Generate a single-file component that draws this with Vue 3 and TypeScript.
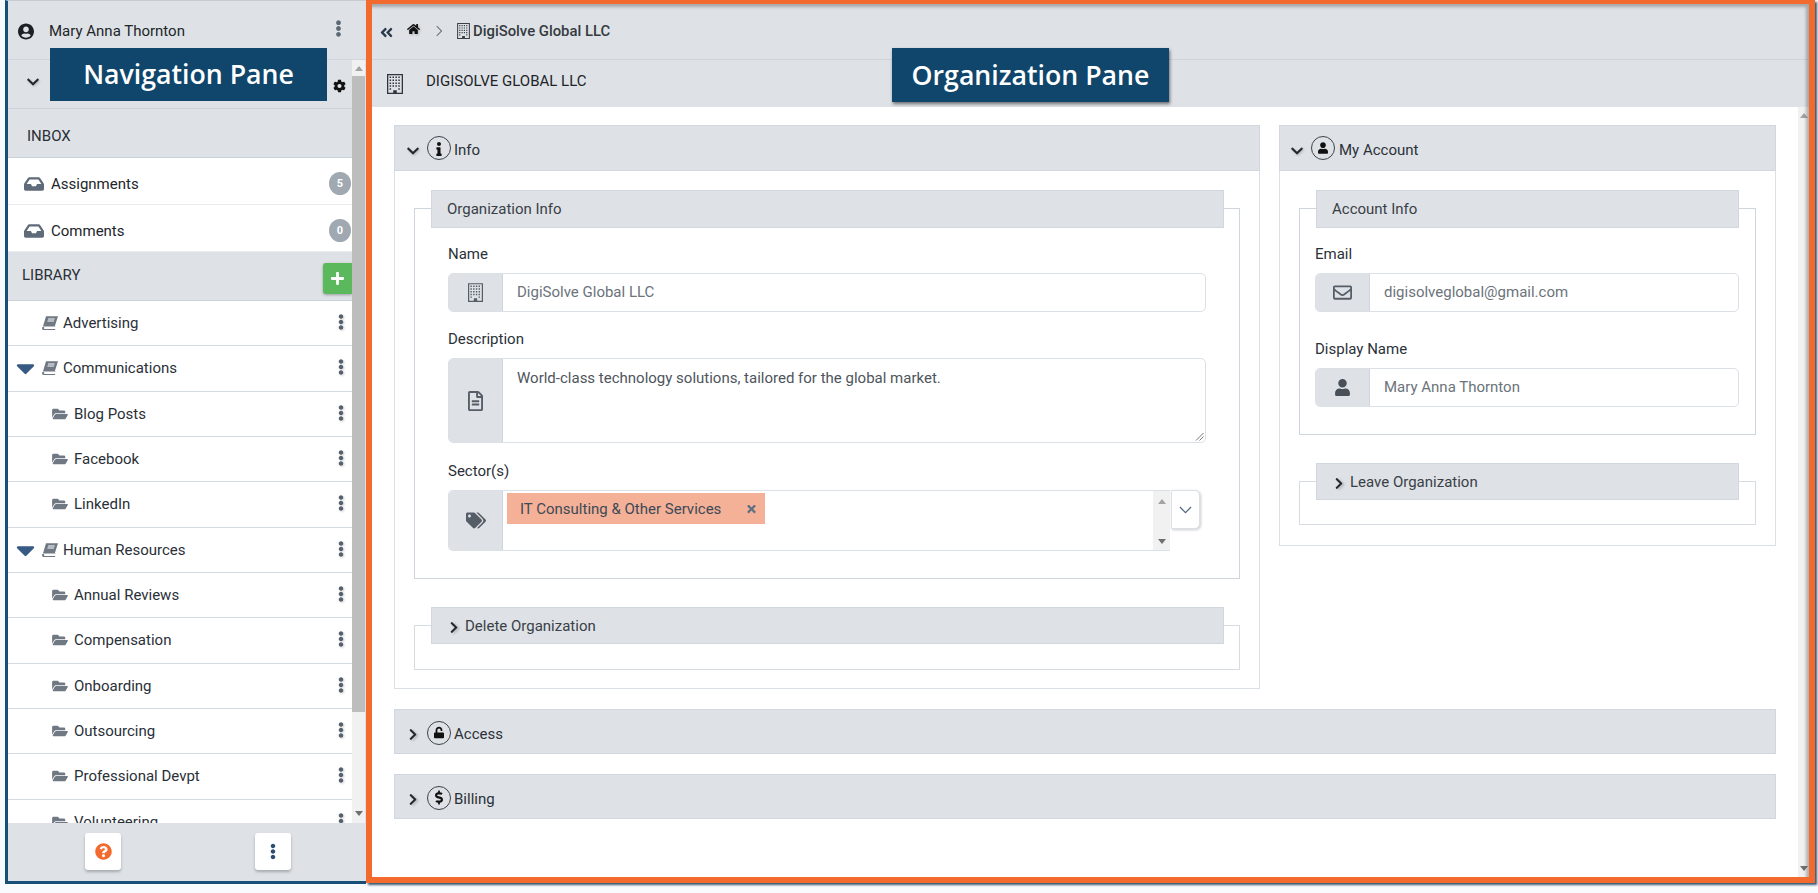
<script setup lang="ts">
import { h } from 'vue'
import type { FunctionalComponent } from 'vue'

type Glyph = { w: number; h: number; d: string }

const gridSquares = (() => {
  let out = 'M0 0H16V20H0ZM1.3 1.3V18.7H14.7V1.3Z'
  for (let r = 0; r < 5; r++) {
    for (let c = 0; c < 4; c++) {
      if (r === 4 && c > 0 && c < 3) continue
      out += `M${2.6 + c * 2.9} ${2.6 + r * 2.9}h1.5v1.5h-1.5z`
    }
  }
  return out + 'M6.2 16.2h3.6v2.6H6.2z'
})()

const glyphs: Record<string, Glyph> = {
  chevDown: { w: 448, h: 512, d: 'M207.029 381.476L12.686 187.132c-9.373-9.373-9.373-24.569 0-33.941l22.667-22.667c9.357-9.357 24.522-9.375 33.901-.04L224 284.505l154.745-154.021c9.379-9.335 24.544-9.317 33.901.04l22.667 22.667c9.373 9.373 9.373 24.569 0 33.941L240.971 381.476c-9.373 9.372-24.569 9.372-33.942 0z' },
  chevThin: { w: 12, h: 8, d: 'M.9.6L6 5.7 11.1.6l.9.9-6 6-6-6z' },
  chevRight: { w: 320, h: 512, d: 'M285.476 272.971L91.132 467.314c-9.373 9.373-24.569 9.373-33.941 0l-22.667-22.667c-9.357-9.357-9.375-24.522-.04-33.901L188.505 256 34.484 101.255c-9.335-9.379-9.317-24.544.04-33.901l22.667-22.667c9.373-9.373 24.569-9.373 33.941 0L285.475 239.03c9.373 9.372 9.373 24.568.001 33.941z' },
  plus: { w: 448, h: 512, d: 'M416 208H272V64c0-17.67-14.33-32-32-32h-32c-17.67 0-32 14.33-32 32v144H32c-17.67 0-32 14.33-32 32v32c0 17.67 14.33 32 32 32h144v144c0 17.67 14.33 32 32 32h32c17.67 0 32-14.33 32-32V304h144c17.67 0 32-14.33 32-32v-32c0-17.67-14.33-32-32-32z' },
  dots: { w: 192, h: 512, d: 'M96 184c39.8 0 72 32.2 72 72s-32.2 72-72 72-72-32.2-72-72 32.2-72 72-72zM24 80c0 39.8 32.2 72 72 72s72-32.2 72-72S135.8 8 96 8 24 40.2 24 80zm0 352c0 39.8 32.2 72 72 72s72-32.2 72-72-32.2-72-72-72-72 32.2-72 72z' },
  home: { w: 576, h: 512, d: 'M280.37 148.26L96 300.11V464a16 16 0 0 0 16 16l112.06-.29a16 16 0 0 0 15.92-16V368a16 16 0 0 1 16-16h64a16 16 0 0 1 16 16v95.64a16 16 0 0 0 16 16.05L464 480a16 16 0 0 0 16-16V300L295.67 148.26a12.19 12.19 0 0 0-15.3 0zM571.6 251.47L488 182.56V44.05a12 12 0 0 0-12-12h-56a12 12 0 0 0-12 12v72.61L318.47 43a48 48 0 0 0-61 0L4.34 251.47a12 12 0 0 0-1.6 16.9l25.5 31A12 12 0 0 0 45.15 301l235.22-193.74a12.19 12.19 0 0 1 15.3 0L530.9 301a12 12 0 0 0 16.9-1.6l25.5-31a12 12 0 0 0-1.7-16.93z' },
  user: { w: 448, h: 512, d: 'M224 256c70.7 0 128-57.3 128-128S294.7 0 224 0 96 57.3 96 128s57.3 128 128 128zm89.6 32h-16.7c-22.2 10.2-46.9 16-72.9 16s-50.6-5.8-72.9-16h-16.7C60.2 288 0 348.2 0 422.4V464c0 26.5 21.5 48 48 48h352c26.5 0 48-21.5 48-48v-41.6c0-74.2-60.2-134.4-134.4-134.4z' },
  userCircle: { w: 496, h: 512, d: 'M248 8C111 8 0 119 0 256s111 248 248 248 248-111 248-248S385 8 248 8zm0 96c48.6 0 88 39.4 88 88s-39.4 88-88 88-88-39.4-88-88 39.4-88 88-88zm0 344c-58.7 0-111.3-26.6-146.5-68.2 18.8-35.4 55.6-59.8 98.5-59.8 2.4 0 4.8.4 7.1 1.1 13 4.2 26.6 6.9 40.9 6.9 14.3 0 28-2.7 40.9-6.9 2.3-.7 4.7-1.1 7.1-1.1 42.9 0 79.7 24.4 98.5 59.8C359.3 421.4 306.7 448 248 448z' },
  help: { w: 512, h: 512, d: 'M504 256c0 136.997-111.043 248-248 248S8 392.997 8 256C8 119.083 119.043 8 256 8s248 111.083 248 248zM262.655 90c-54.497 0-89.255 22.957-116.549 63.758-3.536 5.286-2.353 12.415 2.715 16.258l34.699 26.31c5.205 3.947 12.621 3.008 16.665-2.122 17.864-22.658 30.113-35.797 57.303-35.797 20.429 0 45.698 13.148 45.698 32.958 0 14.976-12.363 22.667-32.534 33.976C247.128 238.528 216 254.941 216 296v4c0 6.627 5.373 12 12 12h56c6.627 0 12-5.373 12-12v-1.333c0-28.462 83.186-29.647 83.186-106.667 0-58.002-60.165-102-116.531-102zM256 338c-25.365 0-46 20.635-46 46 0 25.364 20.635 46 46 46s46-20.636 46-46c0-25.365-20.635-46-46-46z' },
  cog: { w: 512, h: 512, d: 'M487.4 315.7l-42.6-24.6c4.3-23.2 4.3-47 0-70.2l42.6-24.6c4.9-2.8 7.1-8.6 5.5-14-11.1-35.6-30-67.8-54.7-94.6-3.8-4.1-10-5.1-14.8-2.3L380.8 110c-17.9-15.4-38.5-27.3-60.8-35.1V25.8c0-5.6-3.9-10.5-9.4-11.7-36.7-8.2-74.3-7.8-109.2 0-5.5 1.2-9.4 6.1-9.4 11.7V75c-22.2 7.9-42.8 19.8-60.8 35.1L88.7 85.5c-4.9-2.8-11-1.9-14.8 2.3-24.7 26.7-43.6 58.9-54.7 94.6-1.7 5.4.6 11.2 5.5 14L67.3 221c-4.3 23.2-4.3 47 0 70.2l-42.6 24.6c-4.9 2.8-7.1 8.6-5.5 14 11.1 35.6 30 67.8 54.7 94.6 3.8 4.1 10 5.1 14.8 2.3l42.6-24.6c17.9 15.4 38.5 27.3 60.8 35.1v49.2c0 5.6 3.9 10.5 9.4 11.7 36.7 8.2 74.3 7.8 109.2 0 5.5-1.2 9.4-6.1 9.4-11.7v-49.2c22.2-7.9 42.8-19.8 60.8-35.1l42.6 24.6c4.9 2.8 11 1.9 14.8-2.3 24.7-26.7 43.6-58.9 54.7-94.6 1.5-5.5-.7-11.3-5.6-14.1zM256 336c-44.1 0-80-35.9-80-80s35.9-80 80-80 80 35.9 80 80-35.9 80-80 80z' },
  caret: { w: 320, h: 512, d: 'M31.3 192h257.3c17.8 0 26.7 21.5 14.1 34.1L174.1 354.8c-7.8 7.8-20.5 7.8-28.3 0L17.2 226.1C4.6 213.5 13.5 192 31.3 192z' },
  times: { w: 352, h: 512, d: 'M242.72 256l100.07-100.07c12.28-12.28 12.28-32.19 0-44.48l-22.24-22.24c-12.28-12.28-32.19-12.28-44.48 0L176 189.28 75.93 89.21c-12.28-12.28-32.19-12.28-44.48 0L9.21 111.45c-12.28 12.28-12.28 32.19 0 44.48L109.28 256 9.21 356.07c-12.28 12.28-12.28 32.19 0 44.48l22.24 22.24c12.28 12.28 32.2 12.28 44.48 0L176 322.72l100.07 100.07c12.28 12.28 32.2 12.28 44.48 0l22.24-22.24c12.28-12.28 12.28-32.19 0-44.48L242.72 256z' },
  folder: { w: 576, h: 512, d: 'M572.694 292.093L500.27 416.248A63.997 63.997 0 0 1 444.989 448H45.025c-18.523 0-30.064-20.093-20.731-36.093l72.424-124.155A64 64 0 0 1 152 256h399.964c18.523 0 30.064 20.093 20.73 36.093zM152 224h328v-48c0-26.51-21.49-48-48-48H272l-64-64H48C21.49 64 0 85.49 0 112v278.046l69.077-118.418C86.214 242.25 117.989 224 152 224z' },
  tags: { w: 640, h: 512, d: 'M497.941 225.941L286.059 14.059A48 48 0 0 0 252.118 0H48C21.49 0 0 21.49 0 48v204.118a48 48 0 0 0 14.059 33.941l211.882 211.882c18.744 18.745 49.136 18.746 67.882 0l204.118-204.118c18.745-18.745 18.745-49.137 0-67.882zM112 160c-26.51 0-48-21.49-48-48s21.49-48 48-48 48 21.49 48 48-21.49 48-48 48zm513.941 133.823L421.823 497.941c-18.745 18.745-49.137 18.745-67.882 0l-.36-.36L527.64 323.522c16.999-16.999 26.36-39.6 26.36-63.64s-9.362-46.641-26.36-63.64L331.397 0h48.721a48 48 0 0 1 33.941 14.059l211.882 211.882c18.745 18.745 18.745 49.137 0 67.882z' },
  inbox: { w: 576, h: 512, d: 'M567.938 243.908L462.25 85.374A48.003 48.003 0 0 0 422.311 64H153.689a48 48 0 0 0-39.938 21.374L8.062 243.908A47.994 47.994 0 0 0 0 270.533V400c0 26.51 21.49 48 48 48h480c26.51 0 48-21.49 48-48V270.533a47.994 47.994 0 0 0-8.062-26.625zM162.252 128h251.497l85.333 128H376l-32 64H232l-32-64H76.918l85.334-128z' },
  info: { w: 192, h: 512, d: 'M20 424.229h20V279.771H20c-11.046 0-20-8.954-20-20V212c0-11.046 8.954-20 20-20h112c11.046 0 20 8.954 20 20v212.229h20c11.046 0 20 8.954 20 20V492c0 11.046-8.954 20-20 20H20c-11.046 0-20-8.954-20-20v-47.771c0-11.046 8.954-20 20-20zM96 0C56.235 0 24 32.235 24 72s32.235 72 72 72 72-32.235 72-72S135.764 0 96 0z' },
  unlock: { w: 448, h: 512, d: 'M400 256H152V152.9c0-39.6 31.7-72.5 71.3-72.9 40-.4 72.7 32.1 72.7 72v16c0 13.3 10.7 24 24 24h32c13.3 0 24-10.7 24-24v-16C376 68 307.5-.3 223.5 0 139.5.3 72 69.5 72 153.5V256H48c-26.5 0-48 21.5-48 48v160c0 26.5 21.5 48 48 48h352c26.5 0 48-21.5 48-48V304c0-26.5-21.5-48-48-48z' },
  dollar: { w: 288, h: 512, d: 'M209.2 233.4l-108-31.6C88.7 198.2 80 186.5 80 173.5c0-16.3 13.2-29.5 29.5-29.5h66.3c12.2 0 24.2 3.7 34.2 10.5 6.1 4.1 14.3 3.1 19.5-2l34.8-34c7.1-6.9 6.1-18.4-1.8-24.5C238 74.8 207.4 64.1 176 64V16c0-8.8-7.2-16-16-16h-32c-8.8 0-16 7.2-16 16v48h-2.5C45.8 64-5.4 118.7.5 183.6c4.2 46.1 39.4 83.6 83.8 96.6l102.5 30c12.5 3.7 21.2 15.3 21.2 28.3 0 16.3-13.2 29.5-29.5 29.5h-66.3C100 368 88 364.3 78 357.5c-6.1-4.1-14.3-3.1-19.5 2l-34.8 34c-7.1 6.9-6.1 18.4 1.8 24.5 24.5 19.2 55.1 29.9 86.5 30v48c0 8.8 7.2 16 16 16h32c8.8 0 16-7.2 16-16v-48.2c46.6-.9 90.3-28.6 105.7-72.7 21.5-61.6-14.6-124.8-72.5-141.7z' },
  fileAlt: { w: 384, h: 512, d: 'M288 248v28c0 6.6-5.4 12-12 12H108c-6.6 0-12-5.4-12-12v-28c0-6.6 5.4-12 12-12h168c6.6 0 12 5.4 12 12zm-12 72H108c-6.6 0-12 5.4-12 12v28c0 6.6 5.4 12 12 12h168c6.6 0 12-5.4 12-12v-28c0-6.6-5.4-12-12-12zm108-188.1V464c0 26.5-21.5 48-48 48H48c-26.5 0-48-21.5-48-48V48C0 21.5 21.5 0 48 0h204.1C264.8 0 277 5.1 286 14.1L369.9 98c9 8.9 14.1 21.2 14.1 33.9zm-128-80V128h76.1L256 51.9zM336 464V176H232c-13.3 0-24-10.7-24-24V48H48v416h288z' },
  envelope: { w: 512, h: 512, d: 'M464 64H48C21.49 64 0 85.49 0 112v288c0 26.51 21.49 48 48 48h416c26.51 0 48-21.49 48-48V112c0-26.51-21.49-48-48-48zm0 48v40.805c-22.422 18.259-58.168 46.651-134.587 106.49-16.841 13.247-50.201 45.072-73.413 44.701-23.208.375-56.579-31.459-73.413-44.701C106.18 199.465 70.425 171.067 48 152.805V112h416zM48 400V214.398c22.914 18.251 55.409 43.862 104.938 82.646 21.857 17.205 60.134 55.186 103.062 54.955 42.717.231 80.509-37.199 103.053-54.947 49.528-38.783 82.032-64.401 104.947-82.653V400H48z' },
  angles: { w: 448, h: 512, d: 'M223.7 239l136-136c9.4-9.4 24.6-9.4 33.9 0l22.6 22.6c9.4 9.4 9.4 24.6 0 33.9L319.9 256l96.4 96.4c9.4 9.4 9.4 24.6 0 33.9L393.7 409c-9.4 9.4-24.6 9.4-33.9 0l-136-136c-9.5-9.4-9.5-24.6-.1-34zm-192 34l136 136c9.4 9.4 24.6 9.4 33.9 0l22.6-22.6c9.4-9.4 9.4-24.6 0-33.9L127.9 256l96.4-96.4c9.4-9.4 9.4-24.6 0-33.9L201.7 103c-9.4-9.4-24.6-9.4-33.9 0l-136 136c-9.5 9.4-9.5 24.6-.1 34z' },
  angleThin: { w: 10, h: 16, d: 'M1.6 0.6L9 8l-7.4 7.4-1.1-1.1L6.8 8 .5 1.7z' },
  book: { w: 16, h: 14, d: 'M4 .3H16L12.9 10H1.1ZM6.2 2.6l-.3 1h6.6l.3-1ZM5.6 4.6l-.3 1h6.6l.3-1ZM1.1 10.4C-.3 11.2-.4 13.4 1.3 14H13l.3-1H2.6c-1.1-.3-1.1-1.6 0-1.9h10.7l.2-.7Z' },
  building: { w: 16, h: 20, d: gridSquares },
}

const Ico: FunctionalComponent<{ name: string }> = (props) => {
  const g = glyphs[props.name]
  return h('svg', { viewBox: `0 0 ${g.w} ${g.h}`, fill: 'currentColor', 'aria-hidden': 'true' }, [
    h('path', { d: g.d, 'fill-rule': 'evenodd' }),
  ])
}
Ico.props = ['name']

const inbox = [
  { label: 'Assignments', count: 5 },
  { label: 'Comments', count: 0 },
]

const library = [
  { label: 'Advertising', kind: 'book', open: false },
  { label: 'Communications', kind: 'book', open: true },
  { label: 'Blog Posts', kind: 'folder', open: false },
  { label: 'Facebook', kind: 'folder', open: false },
  { label: 'LinkedIn', kind: 'folder', open: false },
  { label: 'Human Resources', kind: 'book', open: true },
  { label: 'Annual Reviews', kind: 'folder', open: false },
  { label: 'Compensation', kind: 'folder', open: false },
  { label: 'Onboarding', kind: 'folder', open: false },
  { label: 'Outsourcing', kind: 'folder', open: false },
  { label: 'Professional Devpt', kind: 'folder', open: false },
  { label: 'Volunteering', kind: 'folder', open: false },
]
</script>

<template>
  <div class="app">
    <aside class="nav">
      <div class="nav-top">
        <Ico name="userCircle" class="i-user" />
        <span class="nav-name">Mary Anna Thornton</span>
        <Ico name="dots" class="i-dots-top" />
      </div>
      <div class="nav-mid">
        <div class="nav-col">
          <div class="row-settings">
            <Ico name="chevDown" class="i-chev" />
            <Ico name="cog" class="i-cog" />
          </div>
          <div class="row-inbox">INBOX</div>
          <div v-for="m in inbox" :key="m.label" class="row-mail">
            <Ico name="inbox" class="i-inbox" />
            <span class="grow">{{ m.label }}</span>
            <span class="badge">{{ m.count }}</span>
          </div>
          <div class="row-library">
            <span class="grow">LIBRARY</span>
            <span class="add"><Ico name="plus" class="i-plus" /></span>
          </div>
          <div class="tree">
            <div v-for="n in library" :key="n.label" class="tree-row" :class="n.kind">
              <Ico v-if="n.open" name="caret" class="i-caret" />
              <Ico :name="n.kind" class="i-kind" />
              <span class="grow">{{ n.label }}</span>
              <Ico name="dots" class="i-dots" />
            </div>
          </div>
        </div>
        <div class="sb sb-nav">
          <span class="up"></span>
          <span class="thumb"></span>
          <span class="rest"><span class="down"></span></span>
        </div>
      </div>
      <div class="nav-foot">
        <span class="foot-btn"><Ico name="help" class="i-help" /></span>
        <span class="foot-btn"><Ico name="dots" class="i-foot-dots" /></span>
      </div>
    </aside>

    <main class="org">
      <div class="crumbs">
        <Ico name="angles" class="i-angles" />
        <Ico name="home" class="i-home" />
        <Ico name="angleThin" class="i-sep" />
        <Ico name="building" class="i-bc" />
        <span class="crumb-text">DigiSolve Global LLC</span>
      </div>
      <div class="title">
        <Ico name="building" class="i-title" />
        <span>DIGISOLVE GLOBAL LLC</span>
      </div>
      <div class="org-body">
        <div class="content">
          <div class="cols">
            <section class="panel">
              <header class="panel-head">
                <Ico name="chevDown" class="i-chev-sm" />
                <span class="ring"><Ico name="info" class="i-ring-info" /></span>
                <span class="head-text">Info</span>
              </header>
              <div class="panel-body">
                <div class="group">
                  <div class="group-head">Organization Info</div>
                  <div class="fields wide">
                    <div class="field first">
                      <div class="label">Name</div>
                      <div class="input">
                        <span class="addon"><Ico name="building" class="i-addon-b" /></span>
                        <span class="value">DigiSolve Global LLC</span>
                      </div>
                    </div>
                    <div class="field">
                      <div class="label">Description</div>
                      <div class="input area">
                        <span class="addon"><Ico name="fileAlt" class="i-addon" /></span>
                        <span class="value area-text">World-class technology solutions, tailored for the global market.</span>
                        <svg class="grip" viewBox="0 0 10 10"><path d="M9.5 2 2 9.5M9.5 5.5 5.5 9.5" stroke="#777" fill="none" /></svg>
                      </div>
                    </div>
                    <div class="field sectors">
                      <div class="label">Sector(s)</div>
                      <div class="sector-row">
                        <div class="input sector">
                          <span class="addon"><Ico name="tags" class="i-tags" /></span>
                          <div class="sector-main">
                            <span class="tag">
                              <span>IT Consulting &amp; Other Services</span>
                              <Ico name="times" class="i-times" />
                            </span>
                          </div>
                          <div class="sb sb-sector"><span class="up"></span><span class="down"></span></div>
                        </div>
                        <span class="drop"><Ico name="chevThin" class="i-drop" /></span>
                      </div>
                    </div>
                  </div>
                </div>
                <div class="group closed">
                  <div class="group-head">
                    <Ico name="chevRight" class="i-chev-r" />
                    <span>Delete Organization</span>
                  </div>
                </div>
              </div>
            </section>

            <section class="panel">
              <header class="panel-head mine">
                <Ico name="chevDown" class="i-chev-sm" />
                <span class="ring"><Ico name="user" class="i-ring-user" /></span>
                <span class="head-text">My Account</span>
              </header>
              <div class="panel-body account">
                <div class="group">
                  <div class="group-head">Account Info</div>
                  <div class="fields">
                    <div class="field first">
                      <div class="label">Email</div>
                      <div class="input">
                        <span class="addon"><Ico name="envelope" class="i-addon-e" /></span>
                        <span class="value">digisolveglobal@gmail.com</span>
                      </div>
                    </div>
                    <div class="field loose">
                      <div class="label">Display Name</div>
                      <div class="input">
                        <span class="addon"><Ico name="user" class="i-addon-u" /></span>
                        <span class="value">Mary Anna Thornton</span>
                      </div>
                    </div>
                  </div>
                </div>
                <div class="group closed short">
                  <div class="group-head">
                    <Ico name="chevRight" class="i-chev-r" />
                    <span>Leave Organization</span>
                  </div>
                </div>
              </div>
            </section>
          </div>

          <header class="panel-head solo">
            <Ico name="chevRight" class="i-chev-r2" />
            <span class="ring"><Ico name="unlock" class="i-ring-lock" /></span>
            <span class="head-text">Access</span>
          </header>
          <header class="panel-head solo">
            <Ico name="chevRight" class="i-chev-r2" />
            <span class="ring"><Ico name="dollar" class="i-ring-dollar" /></span>
            <span class="head-text">Billing</span>
          </header>
        </div>
        <div class="sb sb-org"><span class="up"></span><span class="down"></span></div>
      </div>
    </main>

    <div class="callout callout-nav">Navigation Pane</div>
    <div class="callout callout-org">Organization Pane</div>
  </div>
</template>

<style>
html, body { margin: 0; background: #f8fafd; }
</style>

<style scoped>
* { box-sizing: border-box; }
svg { display: block; flex: none; }
.app {
  position: relative; display: flex; width: 1818px; height: 893px; padding-left: 5px; overflow: hidden;
  font: 400 15px/20px Roboto, "Liberation Sans", sans-serif; color: #212529; background: #f8fafd;
}
.grow { flex: 1; min-width: 0; }

/* Navigation pane */
.nav {
  width: 361px; height: 884px; display: flex; flex-direction: column;
  border-left: 3px solid #174f78; border-bottom: 3px solid #174f78; border-top: 1px solid #c5cbd2; background: #dee2e6;
}
.nav-top { height: 59px; flex: none; display: flex; align-items: center; border-bottom: 1px solid #d0d5db; padding: 2px 0 0 10px; }
.i-user { width: 16px; height: 17px; color: #1d2126; }
.nav-name { margin-left: 15px; flex: 1; }
.i-dots-top { width: 7px; height: 17px; color: #5d6875; margin-right: 24px; margin-top: -5px; }
.nav-mid { flex: 1; min-height: 0; display: flex; }
.nav-col { width: 344px; display: flex; flex-direction: column; min-height: 0; }
.row-settings { height: 49px; flex: none; display: flex; align-items: center; justify-content: space-between; padding: 0 6px 0 19px; border-bottom: 1px solid #cdd3da; }
.i-chev { width: 12px; height: 14px; color: #23282d; margin-top: -4px; filter: drop-shadow(1px 1px 1px rgba(0,0,0,.2)); }
.i-cog { width: 13px; height: 14px; color: #111; margin-top: 4px; }
.row-inbox { height: 49px; flex: none; padding: 19px 0 0 19px; border-bottom: 1px solid #c9d1da; line-height: 17px; color: #2b2f36; }
.row-mail { height: 47px; flex: none; display: flex; align-items: center; background: #fff; border-bottom: 1px solid #e9ecef; padding: 5px 1px 0 16px; }
.i-inbox { width: 20px; height: 20px; color: #5f6b78; margin-right: 7px; }
.badge { width: 22px; height: 23px; border-radius: 50%; background: #a0a8b2; color: #fff; font-size: 11px; font-weight: 700; line-height: 23px; text-align: center; }
.row-library { height: 49px; flex: none; display: flex; align-items: flex-start; padding: 13px 0 0 14px; border-bottom: 1px solid #c9d1da; color: #2b2f36; }
.add { width: 29px; height: 31px; margin-top: -2px; background: #5cb85c; border-radius: 3px 0 0 3px; box-shadow: 0 1px 3px rgba(0,0,0,.3); display: flex; align-items: center; justify-content: center; }
.i-plus { width: 13px; height: 15px; color: #fff; }
.tree { flex: 1; min-height: 0; overflow: hidden; background: #fff; }
.tree-row { height: 45.33px; display: flex; align-items: center; border-bottom: 1px solid #d5dbe2; padding: 0 8px 0 34px; position: relative; color: #2a3038; }
.tree-row.folder { padding-left: 44px; }
.i-caret { position: absolute; left: 8px; top: 7px; width: 19px; height: 30px; color: #375a84; }
.i-kind { width: 16px; height: 14px; color: #6f7883; margin-right: 5px; }
.folder .i-kind { margin-right: 6px; width: 16px; }
.i-dots { width: 6px; height: 16px; color: #56616e; margin-top: -2px; filter: drop-shadow(1px 1px 1px rgba(0,0,0,.18)); }

.sb { background: #f1f1f1; display: flex; flex-direction: column; align-items: center; justify-content: space-between; }
.up, .down { width: 0; height: 0; border-left: 4px solid transparent; border-right: 4px solid transparent; flex: none; }
.up { border-bottom: 5px solid #a3a3a3; }
.down { border-top: 5px solid #6f6f6f; }
.sb-nav { width: 13px; align-items: stretch; justify-content: flex-start; }
.sb-nav .up { align-self: center; margin: 6px 0 5px; }
.thumb { height: 636px; background: #bdbdbd; flex: none; }
.rest { flex: 1; display: flex; justify-content: center; align-items: flex-end; padding-bottom: 7px; }
.nav-foot { height: 58px; flex: none; display: flex; gap: 134px; padding: 10px 0 0 77px; background: #dee2e6; }
.foot-btn { width: 36px; height: 37px; background: #fff; border-radius: 3px; box-shadow: 0 2px 3px rgba(0,0,0,.25); display: flex; align-items: center; justify-content: center; }
.i-help { width: 17px; height: 17px; color: #f26a2e; }
.i-foot-dots { width: 6px; height: 17px; color: #2f4d70; }

/* Organization pane */
.org {
  position: relative; width: 1449px; height: 883px; display: flex; flex-direction: column;
  border: solid #f26a2e; border-width: 4px 6px 6px 6px; background: #fff;
  box-shadow: 1.5px 1.5px 2px rgba(10,50,80,.8);
}
.org::after { content: ""; position: absolute; inset: 0; pointer-events: none; box-shadow: inset -4px 4px 3px -1px rgba(60,60,60,.35); }
.crumbs { height: 56px; flex: none; display: flex; align-items: center; padding: 0 0 2px 8px; background: #dee2e6; border-bottom: 1px solid #cfd4da; }
.i-angles { width: 13px; height: 15px; color: #2a3a4c; margin-top: 3px; }
.i-home { width: 13px; height: 12px; color: #111; margin-left: 14px; margin-top: -3px; filter: drop-shadow(1px 1px 1px rgba(0,0,0,.2)); }
.i-sep { width: 7px; height: 12px; color: #6d7580; margin-left: 16px; }
.i-bc { width: 13px; height: 16px; color: #3a4048; margin-left: 14px; }
.crumb-text { margin-left: 3px; font-weight: 500; font-size: 14.85px; color: #343a40; }
.title { height: 47px; flex: none; display: flex; align-items: center; padding-left: 15px; background: #dee2e6; color: #212529; }
.title span { margin-top: -6px; }
.i-title { width: 16px; height: 20px; color: #2f353c; margin-right: 23px; margin-top: 1px; }
.org-body { flex: 1; min-height: 0; display: flex; }
.content { flex: 1; min-width: 0; padding: 18px 22px 0; }
.sb-org { width: 11px; padding: 6px 0; }
.cols { display: grid; grid-template-columns: 866px 497px; gap: 19px; align-items: start; }
.panel { border: 1px solid #dbe0e6; border-top: 0; }
.panel-head { height: 46px; display: flex; align-items: center; background: #dee2e6; border: 1px solid #d0d7df; margin: 0 -1px; padding: 0 0 0 12px; color: #2b3138; }
.panel-head.mine { padding-left: 11px; }
.panel-head.solo { margin: 20px 0 0; height: 45px; padding-left: 14px; width: 1382px; }
.head-text { margin-top: 3px; }
.solo .head-text { margin-top: 5px; }
.i-chev-sm { width: 12px; height: 14px; color: #23282d; margin-top: 6px; filter: drop-shadow(1px 1px 1px rgba(0,0,0,.2)); }
.i-chev-r2 { width: 8px; height: 13px; color: #23282d; margin-top: 6px; filter: drop-shadow(2px 1px 1px rgba(0,0,0,.2)); }
.ring { width: 24px; height: 24px; border-radius: 50%; border: 1.4px solid #3d434b; display: flex; align-items: center; justify-content: center; margin: 0 3px 0 8px; }
.mine .ring { margin-right: 4px; }
.panel-head.solo .ring { margin: 2px 3px 0 10px; }
.i-ring-info { width: 6px; height: 14px; color: #111; margin-top: 1px; }
.i-ring-user { width: 10px; height: 12px; color: #111; }
.i-ring-lock { width: 10px; height: 13px; color: #111; }
.i-ring-dollar { width: 8px; height: 15px; color: #111; }
.panel-body { padding: 18px 19px 18px; display: flex; flex-direction: column; }
.panel-body.account { padding-bottom: 20px; }
.panel-body .group { margin-top: 19px; }
.group { border: 1px solid #ced5dd; }
.group-head { height: 38px; margin: -19px 15px 0 16px; display: flex; align-items: center; padding-left: 15px; background: #dee2e6; border: 1px solid #d0d7df; color: #3a4047; }
.account .group-head { margin-right: 16px; }
.fields { padding: 0 16px 27px 15px; }
.fields.wide { padding: 0 33px 27px 33px; }
.field { margin-top: 17px; }
.field.first { margin-top: 16px; }
.field.sectors { margin-top: 18px; }
.field.loose { margin-top: 27px; }
.label { height: 20px; margin-bottom: 9px; color: #2b3138; }
.input { position: relative; display: flex; height: 39px; background: #fff; border: 1px solid #dbe0e6; border-radius: 5px; overflow: hidden; }
.addon { width: 54px; flex: none; background: #dee2e6; border-right: 1px solid #ced5dd; display: flex; align-items: center; justify-content: center; margin: -1px 0; }
.value { padding-left: 14px; align-self: center; margin-top: -1px; color: #6b737b; }
.area { height: 85px; }
.area-text { align-self: flex-start; margin-top: 0; padding-top: 9px; color: #4e555c; }
.grip { position: absolute; right: 1px; bottom: 1px; width: 10px; height: 10px; }
.i-addon-b { width: 15px; height: 19px; color: #555d66; }
.i-addon { width: 17px; height: 20px; color: #555d66; }
.i-addon-e { width: 19px; height: 19px; color: #555d66; }
.i-addon-u { width: 15px; height: 17px; color: #495058; }
.i-tags { width: 20px; height: 17px; color: #555d66; }
.sector-row { display: flex; gap: 1px; align-items: flex-start; padding-right: 6px; }
.sector { flex: 1; height: 61px; border-radius: 5px 0 0 5px; border-right: 0; }
.sector-main { flex: 1; padding: 2px 4px; }
.tag { width: 258px; height: 31px; display: flex; align-items: center; justify-content: space-between; padding: 0 9px 0 13px; background: #f4b197; color: #3d4956; }
.i-times { width: 9px; height: 12px; color: #5d7083; }
.sb-sector { width: 17px; padding: 9px 0 7px; border-left: 0; margin: -1px 0; }
.drop { width: 29px; height: 39px; background: #fff; border: 1px solid #dbe0e6; border-radius: 0 5px 5px 0; box-shadow: 1px 1px 3px rgba(0,0,0,.2); display: flex; align-items: center; justify-content: center; }
.i-drop { width: 13px; height: 8px; color: #566c86; }
.group.closed { margin-top: 46px; height: 45px; border-color: #d7dce3; }
.group.closed.short { height: 44px; }
.closed .group-head { height: 37px; padding-left: 18px; margin-top: -19px; }
.i-chev-r { width: 8px; height: 13px; color: #23282d; margin-right: 7px; margin-top: 3px; filter: drop-shadow(2px 1px 1px rgba(0,0,0,.2)); }

/* Callouts over the screenshot */
.callout {
  position: absolute; top: 48px; width: 277px; display: flex; align-items: center; justify-content: center;
  background: #10466b; color: #fff; font: 600 26.7px/1 "Open Sans", sans-serif;
}
.callout-nav { left: 50px; height: 53px; }
.callout-org { left: 892px; height: 54px; box-shadow: 1px 2px 3px rgba(0,0,0,.5); }
</style>
